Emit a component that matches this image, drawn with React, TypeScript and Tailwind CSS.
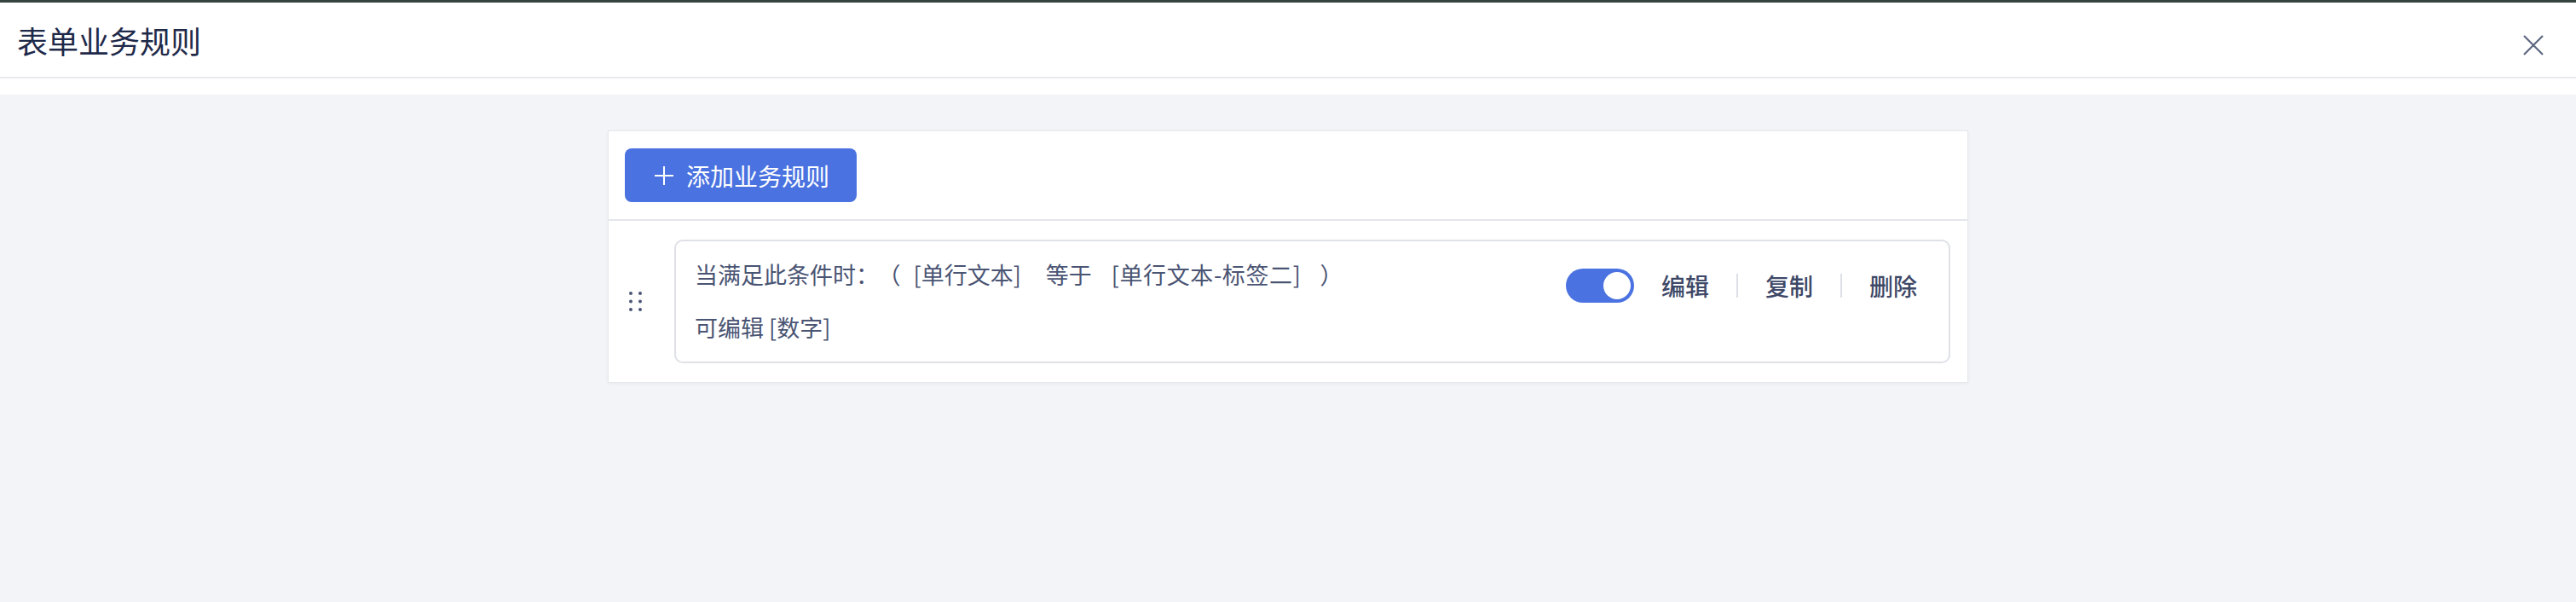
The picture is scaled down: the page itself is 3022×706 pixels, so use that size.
import React, { useState } from "react"

const font = { fontFamily: '"Noto Sans CJK SC", "Noto Sans", sans-serif' }

function DragHandle() {
  return (
    <svg width="16" height="24" viewBox="0 0 16 24" className="shrink-0">
      {[2, 11.5, 21].map((cy) => (
        <g key={cy} fill="#4b5675">
          <circle cx="2" cy={cy} r="2" />
          <circle cx="13" cy={cy} r="2" />
        </g>
      ))}
    </svg>
  )
}

function Toggle({ on, onClick }: { on: boolean; onClick: () => void }) {
  return (
    <button
      onClick={onClick}
      className={`relative h-[40px] w-[80px] shrink-0 rounded-full ${on ? "bg-[#4a72e0]" : "bg-[#c9ccd6]"}`}
    >
      <span
        className={`absolute top-[4px] h-[32px] w-[32px] rounded-full bg-white ${on ? "left-[44px]" : "left-[4px]"}`}
      />
    </button>
  )
}

export default function App() {
  const [enabled, setEnabled] = useState(true)

  return (
    <div className="min-h-screen bg-[#f3f4f7]" style={font}>
      {/* top bar */}
      <div className="h-[3px] bg-[#36443f]" />
      <div className="flex h-[89px] items-center justify-between border-b-2 border-[#e8e9ec] bg-white pl-[20px] pr-[38px]">
        <h1 className="text-[36px] leading-none font-normal text-[#1f2a4a]">表单业务规则</h1>
        <button className="mt-[12px] text-[#5e6782]">
          <svg width="24" height="24" viewBox="0 0 24 24" fill="none" stroke="currentColor" strokeWidth="2.2">
            <path d="M1 1 L23 23 M23 1 L1 23" />
          </svg>
        </button>
      </div>
      <div className="h-[19px] bg-white" />

      {/* content */}
      <div className="pt-[42px]">
        <div className="mx-auto w-[1596px] border border-[#e6e8ec] bg-white shadow-[0_1px_4px_rgba(0,0,0,0.05)]">
          <div className="border-b-2 border-[#e4e6eb] px-[19px] pt-[20px] pb-[20px]">
            <button className="flex h-[63px] items-center gap-[15px] rounded-[8px] bg-[#4a72e0] pl-[35px] pr-[32px] text-[28px] text-white">
              <svg width="22" height="22" viewBox="0 0 22 22" stroke="currentColor" strokeWidth="2">
                <path d="M11 0 V22 M0 11 H22" />
              </svg>
              添加业务规则
            </button>
          </div>

          <div className="flex items-center pt-[22px] pr-[20px] pb-[22px] pl-[24px]">
            <DragHandle />
            <div className="ml-[37px] flex h-[145px] flex-1 items-start justify-between rounded-[10px] border-2 border-[#dfe1e7] pl-[22px]">
              <div className="pt-[19px] text-[27px] text-[#4a5473]">
                <div className="leading-[40px] whitespace-nowrap">
                  当满足此条件时：
                  <span className="ml-[12px]">（</span>
                  <span className="ml-[15px]">[单行文本]</span>
                  <span className="ml-[29px]">等于</span>
                  <span className="ml-[23px] tracking-[0.6px]">[单行文本-标签二]</span>
                  <span className="ml-[22px]">）</span>
                </div>
                <div className="mt-[22px] leading-[40px]">可编辑 [数字]</div>
              </div>
              <div className="mt-[31px] flex items-center gap-[32px] pr-[37px] text-[28px] font-medium text-[#3e4867]">
                <Toggle on={enabled} onClick={() => setEnabled(!enabled)} />
                <button>编辑</button>
                <span className="h-[28px] w-[2px] bg-[#dcdfe6]" />
                <button>复制</button>
                <span className="h-[28px] w-[2px] bg-[#dcdfe6]" />
                <button>删除</button>
              </div>
            </div>
          </div>
        </div>
      </div>
    </div>
  )
}
